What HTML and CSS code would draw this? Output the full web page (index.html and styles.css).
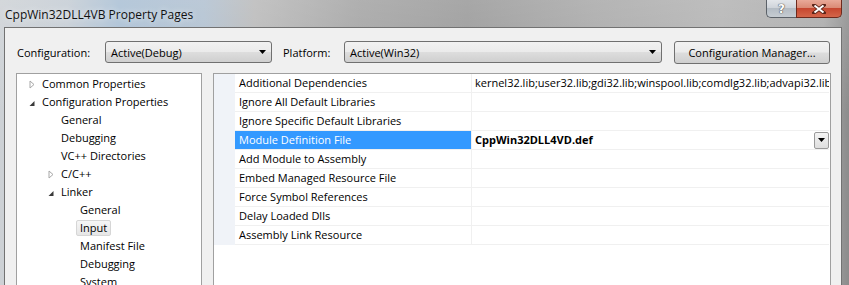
FILE: index.html
```html
<!DOCTYPE html>
<html lang="en">

<head>
    <meta charset="UTF-8" />
    <title>CppWin32DLL4VB Property Pages</title>
    <link rel="stylesheet" href="styles.css">
</head>

<body>

    <div class="window">

        <!-- Caption -->
        <div class="titlebar">
            <div class="title">CppWin32DLL4VB Property Pages</div>
            <div class="caption-btns">
                <div class="cap-help">?</div>
                <div class="cap-close">
                    <svg width="14" height="10" viewBox="0 0 14 10">
                        <path d="M2 1 L12 9 M12 1 L2 9" stroke="#5a2418" stroke-width="3.6" stroke-linecap="square" />
                        <path d="M2.5 1.5 L11.5 8.5 M11.5 1.5 L2.5 8.5" stroke="#ffffff" stroke-width="2" />
                    </svg>
                </div>
            </div>
        </div>

        <div class="client">

            <!-- Configuration / Platform -->
            <div class="cfg-row">
                <label class="lbl-config">Configuration:</label>
                <div class="combo combo-config">
                    <span>Active(Debug)</span>
                    <svg class="drop" width="7" height="4" viewBox="0 0 7 4"><path d="M0 0 H7 L3.5 4 Z" fill="#000" /></svg>
                </div>
                <label class="lbl-platform">Platform:</label>
                <div class="combo combo-platform">
                    <span>Active(Win32)</span>
                    <svg class="drop" width="7" height="4" viewBox="0 0 7 4"><path d="M0 0 H7 L3.5 4 Z" fill="#000" /></svg>
                </div>
                <button class="btn-manager">Configuration Manager...</button>
            </div>

            <div class="panes">

                <!-- Tree -->
                <ul class="tree">
                    <li class="lvl0"><svg class="exp" width="6" height="9" viewBox="0 0 6 9"><path d="M1 1 L5 4.5 L1 8 Z" fill="none" stroke="#a8a8a8" /></svg>Common Properties</li>
                    <li class="lvl0"><svg class="exp" width="6" height="9" viewBox="0 0 6 9"><path d="M5.5 3 V8 H0.5 Z" fill="#3a3a3a" /></svg>Configuration Properties</li>
                    <li class="lvl1">General</li>
                    <li class="lvl1">Debugging</li>
                    <li class="lvl1">VC++ Directories</li>
                    <li class="lvl1"><svg class="exp" width="6" height="9" viewBox="0 0 6 9"><path d="M1 1 L5 4.5 L1 8 Z" fill="none" stroke="#a8a8a8" /></svg>C/C++</li>
                    <li class="lvl1"><svg class="exp" width="6" height="9" viewBox="0 0 6 9"><path d="M5.5 3 V8 H0.5 Z" fill="#3a3a3a" /></svg>Linker</li>
                    <li class="lvl2">General</li>
                    <li class="lvl2"><span class="tree-sel">Input</span></li>
                    <li class="lvl2">Manifest File</li>
                    <li class="lvl2">Debugging</li>
                    <li class="lvl2">System</li>
                </ul>

                <!-- Property grid -->
                <div class="grid">
                    <div class="row">
                        <div class="gutter"></div>
                        <div class="name">Additional Dependencies</div>
                        <div class="value">kernel32.lib;user32.lib;gdi32.lib;winspool.lib;comdlg32.lib;advapi32.lib;shell32.lib;ole32.lib</div>
                    </div>
                    <div class="row">
                        <div class="gutter"></div>
                        <div class="name">Ignore All Default Libraries</div>
                        <div class="value"></div>
                    </div>
                    <div class="row">
                        <div class="gutter"></div>
                        <div class="name">Ignore Specific Default Libraries</div>
                        <div class="value"></div>
                    </div>
                    <div class="row selected">
                        <div class="gutter"></div>
                        <div class="name">Module Definition File</div>
                        <div class="value">
                            <b>CppWin32DLL4VD.def</b>
                            <div class="value-drop">
                                <svg width="7" height="4" viewBox="0 0 7 4"><path d="M0 0 H7 L3.5 4 Z" fill="#000" /></svg>
                            </div>
                        </div>
                    </div>
                    <div class="row">
                        <div class="gutter"></div>
                        <div class="name">Add Module to Assembly</div>
                        <div class="value"></div>
                    </div>
                    <div class="row">
                        <div class="gutter"></div>
                        <div class="name">Embed Managed Resource File</div>
                        <div class="value"></div>
                    </div>
                    <div class="row">
                        <div class="gutter"></div>
                        <div class="name">Force Symbol References</div>
                        <div class="value"></div>
                    </div>
                    <div class="row">
                        <div class="gutter"></div>
                        <div class="name">Delay Loaded Dlls</div>
                        <div class="value"></div>
                    </div>
                    <div class="row">
                        <div class="gutter"></div>
                        <div class="name">Assembly Link Resource</div>
                        <div class="value"></div>
                    </div>
                </div>

            </div>
        </div>
    </div>

</body>

</html>
```

FILE: styles.css
```css
* {
    box-sizing: border-box;
}

body {
    margin: 0;
    width: 849px;
    height: 285px;
    overflow: hidden;
    font-family: 'Open Sans', sans-serif;
    font-size: 11px;
    color: #000;
    background: #9c9c9c;
}

.window {
    width: 849px;
    height: 285px;
    display: flex;
    flex-direction: column;
    overflow: hidden;
    background:
        linear-gradient(180deg, rgba(255, 255, 255, 0.15), rgba(0, 0, 0, 0) 40%),
        linear-gradient(90deg, #cdd1d5 0%, #c4ccd4 8%, #a9bfd4 14%, #b0c0d0 24%, #b9b9b9 30%, #a3a3a3 42%, #989898 55%, #a8a8a8 70%, #b3b3b3 85%, #a9a9a9 97%, #8c8c8c 100%);
}

/* caption */

.titlebar {
    height: 27px;
    flex-shrink: 0;
    display: flex;
    justify-content: space-between;
    align-items: flex-start;
}

.title {
    margin: 6px 0 0 5px;
    font-size: 12px;
    color: #111;
    text-shadow: 0 0 6px rgba(255, 255, 255, 0.8);
}

.caption-btns {
    display: flex;
    margin-right: 7px;
}

.cap-help,
.cap-close {
    height: 18px;
    display: flex;
    align-items: center;
    justify-content: center;
    border: 1px solid #5b6168;
    border-top: none;
}

.cap-help {
    width: 30px;
    border-right: none;
    border-radius: 0 0 0 5px;
    background: linear-gradient(180deg, #e3e6ea 0%, #cfd4da 45%, #b4bcc4 50%, #c6ccd2 100%);
    color: #fff;
    font-family: 'DejaVu Sans', sans-serif;
    font-size: 12px;
    font-weight: bold;
    text-shadow: 0 0 1px #555, 0 0 1px #555, 0 0 1px #555;
}

.cap-close {
    width: 46px;
    border-color: #6d2a1d;
    border-radius: 0 0 5px 0;
    background: linear-gradient(180deg, #e9a998 0%, #db8b75 45%, #c6472f 50%, #d4654a 100%);
}

/* client area */

.client {
    margin-left: 4px;
    width: 838px;
    flex: 1;
    min-height: 0;
    display: flex;
    flex-direction: column;
    background: #f0f0f0;
    border: 1px solid #727272;
    border-bottom: none;
}

.cfg-row {
    display: flex;
    align-items: center;
    flex-shrink: 0;
    padding: 13px 0 0 12px;
    height: 35px;
}

.lbl-config {
    width: 88px;
}

.lbl-platform {
    width: 61px;
    margin-left: 11px;
}

.combo {
    height: 22px;
    display: flex;
    align-items: center;
    justify-content: space-between;
    padding: 0 5px 0 5px;
    border: 1px solid #707070;
    border-radius: 3px;
    background: linear-gradient(180deg, #f2f2f2 0%, #ebebeb 48%, #dddddd 52%, #cfcfcf 100%);
}

.combo-config {
    width: 167px;
}

.combo-platform {
    width: 318px;
}

.btn-manager {
    margin-left: 12px;
    width: 156px;
    height: 23px;
    padding: 0;
    font-family: inherit;
    font-size: 11px;
    color: #000;
    border: 1px solid #707070;
    border-radius: 3px;
    background: linear-gradient(180deg, #f2f2f2 0%, #ebebeb 48%, #dddddd 52%, #cfcfcf 100%);
}

.panes {
    display: flex;
    gap: 11px;
    margin-top: 10px;
    padding-left: 11px;
    flex: 1;
    min-height: 0;
}

/* tree */

.tree {
    list-style: none;
    margin: 0;
    padding: 1px 0 0 0;
    width: 186px;
    overflow: hidden;
    background: #fff;
    border: 1px solid #a0a0a0;
    border-bottom: none;
}

.tree li {
    height: 18px;
    line-height: 18px;
    white-space: nowrap;
}

.tree .lvl0 {
    padding-left: 25px;
}

.tree .lvl1 {
    padding-left: 44px;
}

.tree .lvl2 {
    padding-left: 63px;
}

.exp {
    margin-left: -13px;
    margin-right: 7px;
    vertical-align: -1px;
}

.tree-sel {
    display: inline-block;
    margin-left: -4px;
    padding: 0 3px;
    height: 16px;
    line-height: 14px;
    border: 1px solid #d6d6d6;
    border-radius: 2px;
    background: linear-gradient(180deg, #f6f6f6, #e6e6e6);
}

/* property grid */

.grid {
    width: 618px;
    overflow: hidden;
    background: #fff;
    border: 1px solid #a0a0a0;
    border-bottom: none;
}

.row {
    display: flex;
    width: 615px;
    height: 19px;
}

.gutter {
    width: 21px;
    background: #f0f3f8;
}

.name,
.value {
    height: 19px;
    line-height: 18px;
    border-bottom: 1px solid #f0f0f0;
    white-space: nowrap;
    overflow: hidden;
}

.name {
    width: 237px;
    padding-left: 4px;
    border-right: 1px solid #f0f0f0;
}

.value {
    flex: 1;
    padding-left: 3px;
    display: flex;
    justify-content: space-between;
    align-items: center;
}

.selected .name {
    background: #3399ff;
    color: #fff;
}

.value-drop {
    width: 15px;
    height: 17px;
    display: flex;
    align-items: center;
    justify-content: center;
    border: 1px solid #9a9a9a;
    border-radius: 2px;
    background: linear-gradient(180deg, #f4f4f4, #dedede);
}
```
